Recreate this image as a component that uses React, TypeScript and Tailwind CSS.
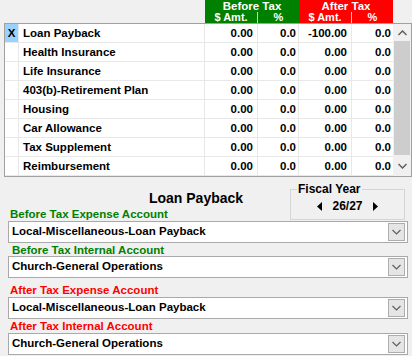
import React from 'react';

const rows = [
  { name: 'Loan Payback', b: '0.00', bp: '0.0', a: '-100.00', ap: '0.0', sel: true },
  { name: 'Health Insurance', b: '0.00', bp: '0.0', a: '0.00', ap: '0.0' },
  { name: 'Life Insurance', b: '0.00', bp: '0.0', a: '0.00', ap: '0.0' },
  { name: '403(b)-Retirement Plan', b: '0.00', bp: '0.0', a: '0.00', ap: '0.0' },
  { name: 'Housing', b: '0.00', bp: '0.0', a: '0.00', ap: '0.0' },
  { name: 'Car Allowance', b: '0.00', bp: '0.0', a: '0.00', ap: '0.0' },
  { name: 'Tax Supplement', b: '0.00', bp: '0.0', a: '0.00', ap: '0.0' },
  { name: 'Reimbursement', b: '0.00', bp: '0.0', a: '0.00', ap: '0.0' },
];

function Combo({ value }: { value: string }) {
  return (
    <div className="flex h-[22px] items-center border border-[#a9a9a9] bg-white pl-[3px] pr-[2px]">
      <span className="flex-1 text-[11.5px] font-bold text-black">{value}</span>
      <div className="flex h-[18px] w-[17px] items-center justify-center border border-[#adadad] bg-[#e5e5e5]">
        <svg width="9" height="6" viewBox="0 0 9 6">
          <path d="M0.5 1 L4.5 5 L8.5 1" fill="none" stroke="#606060" strokeWidth="1.2" />
        </svg>
      </div>
    </div>
  );
}

function TaxHeader({ title, bg, line }: { title: string; bg: string; line: string }) {
  return (
    <div className={`flex w-[94px] flex-col font-bold text-white ${bg}`}>
      <div className="h-[12px] text-center text-[11.5px] leading-[12px]">{title}</div>
      <div className="flex h-[11px] text-[11px] leading-[11px]">
        <div className={`w-[53px] border-r text-center ${line}`}>$ Amt.</div>
        <div className="flex-1 text-center">%</div>
      </div>
    </div>
  );
}

export default function App() {
  return (
    <div
      className="h-[356px] w-[412px] overflow-hidden bg-[#f0f0f0] text-black"
      style={{ fontFamily: '"Liberation Sans", Arial, sans-serif' }}
    >
      {/* column headers */}
      <div className="flex h-[23px]">
        <div className="w-[205px]" />
        <TaxHeader title="Before Tax" bg="bg-[#008000]" line="border-[#c0e0c0]" />
        <TaxHeader title="After Tax" bg="bg-[#ff0000]" line="border-[#ffc0c0]" />
      </div>

      {/* grid */}
      <div className="ml-[4px] flex h-[154px] w-[408px] border border-[#a0a0a0] bg-white">
        <div className="flex w-[388px] flex-col">
          {rows.map((r) => (
            <div key={r.name} className="flex h-[19px] border-b border-[#e8e8e8] text-[11.5px] font-bold leading-[18px]">
              <div className={`w-[14px] border-r border-[#e8e8e8] text-center ${r.sel ? 'bg-[#99d1ff]' : ''}`}>
                {r.sel ? 'X' : ''}
              </div>
              <div className="w-[186px] border-r border-[#e8e8e8] pl-[4px]">{r.name}</div>
              <div className="w-[53px] border-r border-[#e8e8e8] pr-[4px] text-right">{r.b}</div>
              <div className="w-[41px] border-r border-[#e8e8e8] pr-[2px] text-right">{r.bp}</div>
              <div className="w-[53px] border-r border-[#e8e8e8] pr-[4px] text-right">{r.a}</div>
              <div className="w-[41px] pr-[2px] text-right">{r.ap}</div>
            </div>
          ))}
        </div>
        <div className="flex w-[18px] flex-col bg-[#f0f0f0]">
          <div className="flex h-[17px] items-center justify-center">
            <svg width="9" height="6" viewBox="0 0 9 6">
              <path d="M0.5 5 L4.5 1 L8.5 5" fill="none" stroke="#606060" strokeWidth="1.5" />
            </svg>
          </div>
          <div className="mx-[1px] h-[114px] bg-[#cdcdcd]" />
          <div className="flex flex-1 items-center justify-center">
            <svg width="9" height="6" viewBox="0 0 9 6">
              <path d="M0.5 1 L4.5 5 L8.5 1" fill="none" stroke="#606060" strokeWidth="1.5" />
            </svg>
          </div>
        </div>
      </div>

      {/* details */}
      <div className="flex">
        <div className="w-[290px] pt-[9px] text-center">
          <span className="ml-[102px] text-[14px] font-bold">Loan Payback</span>
        </div>
        <div className="relative mt-[12px] h-[31px] w-[115px] border border-[#d5d5d5]">
          <div className="absolute left-[6px] top-[-8px] bg-[#f0f0f0] px-[1px] text-[12px] font-bold leading-[14px]">
            Fiscal Year
          </div>
          <div className="flex h-full items-center justify-center gap-[10px] pt-[3px]">
            <svg width="5" height="9" viewBox="0 0 5 9">
              <path d="M5 0 L0 4.5 L5 9 Z" fill="#000" />
            </svg>
            <span className="text-[12px] font-bold">26/27</span>
            <svg width="5" height="9" viewBox="0 0 5 9">
              <path d="M0 0 L5 4.5 L0 9 Z" fill="#000" />
            </svg>
          </div>
        </div>
      </div>

      <div className="ml-[8px] w-[400px]">
        <div className="-mt-[13px] h-[14px] pl-[2px] text-[11.5px] font-bold leading-[14px] text-[#008000]">Before Tax Expense Account</div>
        <Combo value="Local-Miscellaneous-Loan Payback" />
        <div className="mt-[1px] h-[12px] pl-[4px] text-[11.5px] font-bold leading-[12px] text-[#008000]">Before Tax Internal Account</div>
        <Combo value="Church-General Operations" />
        <div className="mt-[5px] h-[14px] pl-[2px] text-[11.5px] font-bold leading-[14px] text-[#ff0000]">After Tax Expense Account</div>
        <Combo value="Local-Miscellaneous-Loan Payback" />
        <div className="h-[14px] pl-[2px] text-[11.5px] font-bold leading-[14px] text-[#ff0000]">After Tax Internal Account</div>
        <Combo value="Church-General Operations" />
      </div>
    </div>
  );
}
